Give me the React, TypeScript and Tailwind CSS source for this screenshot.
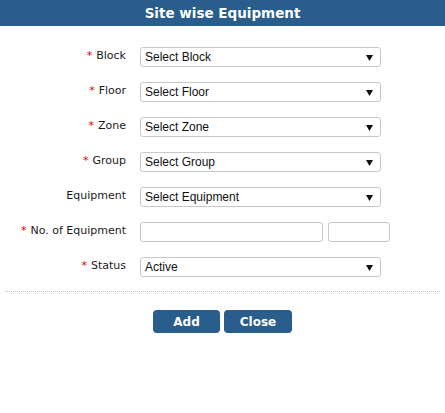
import React from 'react';

const labelFont = { fontFamily: '"DejaVu Sans", Verdana, sans-serif' };

function Caret() {
  return (
    <svg width="7" height="7" viewBox="0 0 7 7" className="shrink-0">
      <path d="M0 1 L7 1 L3.5 7 Z" fill="#111" />
    </svg>
  );
}

function SelectBox({ text }: { text: string }) {
  return (
    <div className="w-[241px] h-[20px] border border-[#c8c8c8] rounded-[3px] bg-white flex items-center justify-between pl-[4px] pr-[7px] font-['Liberation_Sans',Arial,sans-serif] text-[12px] text-[#111]">
      <span>{text}</span>
      <Caret />
    </div>
  );
}

function Row({ label, req, children }: { label: string; req?: boolean; children: React.ReactNode }) {
  return (
    <div className="flex items-start h-[20px]">
      <div className="w-[126px] text-right text-[11px] leading-[14px] pt-[2px] text-[#1a1a1a]" style={labelFont}>
        {req && <span className="text-[#e00000] mr-[4px]">*</span>}
        {label}
      </div>
      <div className="ml-[14px] flex gap-[5px]">{children}</div>
    </div>
  );
}

export default function App() {
  return (
    <div className="w-[445px] h-[413px] bg-white">
      <div className="h-[26px] bg-[#285d8c] flex items-center justify-center text-white text-[13.5px] font-bold" style={labelFont}>
        Site wise Equipment
      </div>
      <div className="flex flex-col gap-[15px] pt-[21px]">
        <Row label="Block" req><SelectBox text="Select Block" /></Row>
        <Row label="Floor" req><SelectBox text="Select Floor" /></Row>
        <Row label="Zone" req><SelectBox text="Select Zone" /></Row>
        <Row label="Group" req><SelectBox text="Select Group" /></Row>
        <Row label="Equipment"><SelectBox text="Select Equipment" /></Row>
        <Row label="No. of Equipment" req>
          <div className="w-[183px] h-[20px] border border-[#c8c8c8] rounded-[3px]" />
          <div className="w-[62px] h-[20px] border border-[#c8c8c8] rounded-[3px]" />
        </Row>
        <Row label="Status" req><SelectBox text="Active" /></Row>
      </div>
      <div className="mx-[5px] mt-[14px] border-t border-dotted border-[#bdbdbd]" />
      <div className="flex justify-center gap-[4px] mt-[18px]">
        <button className="w-[67px] h-[23px] rounded-[4px] bg-[#285d8c] text-white text-[12px] font-bold" style={labelFont}>Add</button>
        <button className="w-[68px] h-[23px] rounded-[4px] bg-[#285d8c] text-white text-[12px] font-bold" style={labelFont}>Close</button>
      </div>
    </div>
  );
}
